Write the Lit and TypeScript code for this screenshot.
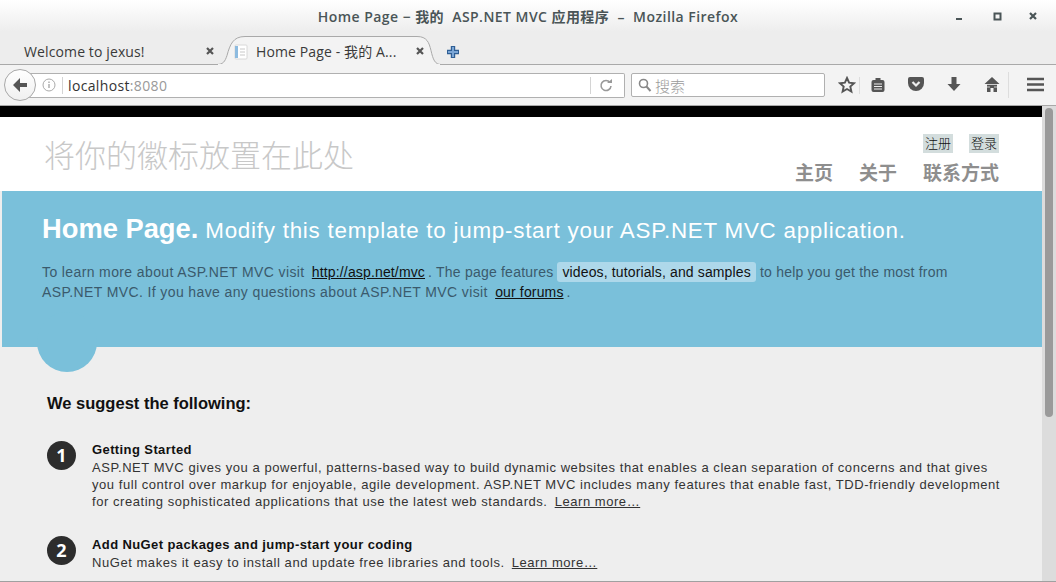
import { LitElement, html, css } from "lit";
import { customElement } from "lit/decorators.js";

@customElement("app-root")
export class AppRoot extends LitElement {
  static styles = css`
    :host { display: block; width: 1056px; height: 582px; overflow: hidden; background: #eee; font-family: "Liberation Sans", "Noto Sans CJK SC", sans-serif; }
    * { box-sizing: border-box; }
    .chrome { height: 106px; background: linear-gradient(#fff 0, #ededed 32px, #ededed 100%); display: flex; flex-direction: column; border-bottom: 1px solid #a8a8a8; font-family: "Open Sans", "Noto Sans CJK SC", sans-serif; }
    .title { height: 32px; display: flex; align-items: center; justify-content: center; font-size: 14px; font-weight: 600; color: #4a5557; position: relative; letter-spacing: 0.45px; }
    .title span { white-space: pre; }
    .winbtns { position: absolute; right: 0; top: 0; }
    .tabs { height: 33px; position: relative; border-bottom: 1px solid #a9a9a9; font-size: 14px; color: #3a3a3a; letter-spacing: 0.12px; }
    .tab1label { position: absolute; left: 24px; top: 10px; line-height: 19px; white-space: nowrap; }
    .tab2 { position: absolute; left: 217px; top: 4px; }
    .tab2label { position: absolute; left: 256px; top: 10px; line-height: 19px; white-space: nowrap; }
    .x { position: absolute; }
    .plus { position: absolute; left: 445px; top: 12px; }
    .nav { flex: 1; position: relative; background: #f3f3f3; }
    .url { position: absolute; left: 20px; top: 8px; width: 605px; height: 25px; background: #fff; border: 1px solid #b0b0b0; border-left: none; border-radius: 0 2px 2px 0; font-size: 14px; line-height: 23px; padding-left: 48px; color: #333; letter-spacing: 0.35px; }
    .url span { color: #999; }
    .back { position: absolute; left: 4px; top: 4px; width: 32px; height: 32px; border-radius: 50%; background: linear-gradient(#fff, #f0f0f0); border: 1px solid #a8a8a8; display: flex; align-items: center; justify-content: center; }
    .sep { position: absolute; top: 12px; height: 17px; width: 1px; background: #d4d4d4; }
    .sep.tall { left: 1008px; height: 26px; top: 7px; background: #ddd; }
    .sep.light { left: 859px; background: #ddd; }
    .search { position: absolute; left: 631px; top: 8px; width: 194px; height: 24px; background: #fff; border: 1px solid #b0b0b0; border-radius: 2px; display: flex; align-items: center; padding-left: 6px; gap: 3px; font-size: 15px; color: #9a9a9a; }
    .search span { font-family: "Noto Sans CJK SC", sans-serif; font-weight: 300; }
    .ic { position: absolute; }
    .view { position: relative; height: 476px; overflow: hidden; background: #eee; }
    .blackbar { height: 11px; background: #000; }
    .head { height: 74px; background: #fff; display: flex; justify-content: space-between; padding: 0 57px 0 44px; }
    .logo { font-size: 31px; color: #c8c8c8; line-height: 36px; padding-top: 19px; font-family: "Noto Sans CJK SC", sans-serif; font-weight: 300; }
    .rightcol { display: flex; flex-direction: column; align-items: flex-end; padding-top: 17px; }
    .login { display: flex; gap: 16px; }
    .login a { background: #d3dddd; color: #111; font-size: 13px; line-height: 18px; height: 19px; padding: 0 2px; font-family: "Noto Sans CJK SC", sans-serif; font-weight: 300; }
    .menu { display: flex; gap: 26px; margin-top: 7px; font-size: 19px; font-weight: 700; color: #8e8e8e; line-height: 24px; font-family: "Noto Sans CJK SC", sans-serif; }
    .hero { position: relative; margin: 0 14px 0 2px; height: 156px; background: #7ac0da; padding: 20px 40px 0; }
    .hero h1 { margin: 0; font-size: 22.4px; line-height: 36px; color: #fff; font-weight: 400; white-space: nowrap; letter-spacing: 0.75px; }
    .hero h1 b { font-size: 27.3px; font-weight: 700; letter-spacing: 0; }
    .hero p { margin: 13px 0 0; font-size: 14px; line-height: 20px; color: #3a5a6c; width: 920px; letter-spacing: 0.22px; }
    .wide { letter-spacing: 0.38px; }
    .hero a { color: #111; text-decoration: underline; margin: 0 3px; letter-spacing: 0.15px; }
    .hl { background: #aed8ea; color: #111; border-radius: 3px; padding: 2px 5px; letter-spacing: 0.13px; }
    .bump { position: absolute; left: 35px; top: 121px; width: 60px; height: 60px; background: #7ac0da; border-radius: 50%; }
    .main { padding: 0 0 0 47px; font-size: 13px; width: 1014px; }
    .main h3 { margin: 0; padding-top: 46px; font-size: 16.5px; line-height: 20px; font-weight: 700; color: #111; }
    .row { position: relative; padding-left: 45px; letter-spacing: 0.55px; line-height: 17px; color: #333; }
    .row.a { margin-top: 28px; }
    .row.b { margin-top: 26px; }
    .row h5 { margin: 0 0 1px; font-size: 13px; line-height: 17px; font-weight: 700; color: #111; letter-spacing: 0.4px; }
    .row p { margin: 0; }
    .row a { color: #333; text-decoration: underline; margin-left: 3px; }
    .num { position: absolute; left: 0; top: 0; width: 29px; height: 29px; border-radius: 50%; background: #2d2d2d; color: #fff; font: 700 18px/29px "Open Sans", sans-serif; text-align: center; letter-spacing: 0; }
    .track { position: absolute; right: 0; top: 0; bottom: 0; width: 14px; background: #dcdcdc; }
    .thumb { position: absolute; left: 3px; top: 2px; width: 8px; height: 309px; border-radius: 4px; background: #9a9a9a; }
    .bottomline { position: absolute; left: 0; right: 0; bottom: 0; height: 1px; background: #a0a0a0; }
  `;

  render() {
    const g = "#555";
    return html`
      <div class="chrome">
        <div class="title">
          <span>Home Page − 我的  ASP.NET MVC 应用程序  –  Mozilla Firefox</span>
          <svg class="winbtns" width="110" height="32">
            <rect x="10" y="18" width="6" height="2" fill="#4a5557"/>
            <rect x="48.500" y="13.500" width="6" height="6" fill="none" stroke="#4a5557" stroke-width="2"/>
            <path d="M84 13l6 6M90 13l-6 6" stroke="#4a5557" stroke-width="2.200" fill="none"/>
          </svg>
        </div>
        <div class="tabs">
          <span class="tab1label">Welcome to jexus!</span>
          <svg class="x" style="left:205px;top:14px" width="11" height="11"><path d="M2 2l6 6M8 2l-6 6" stroke="#555" stroke-width="2.200"/></svg>
          <svg class="tab2" width="224" height="29" viewBox="0 0 224 29">
            <path d="M0 28.500c6 0 8-3 10-9 3-11 6-19 18-19h172c10 0 12 6 14 14 2 9 4 14 10 14" fill="#f3f3f3" stroke="#a9a9a9"/>
            <path d="M1 29h222" stroke="#f3f3f3" stroke-width="2"/>
          </svg>
          <svg class="ic" style="left:233px;top:12px" width="15" height="16">
            <rect x="2" y="1" width="12" height="14" rx="1" fill="#fff" stroke="#d8d8d8"/>
            <rect x="2" y="2" width="3" height="12" fill="#8dbbdf"/>
            <path d="M7 5h5M7 8h5M7 11h5" stroke="#c8c8c8"/>
          </svg>
          <span class="tab2label">Home Page - 我的 A...</span>
          <svg class="x" style="left:415px;top:14px" width="11" height="11"><path d="M2 2l6 6M8 2l-6 6" stroke="#555" stroke-width="2.200"/></svg>
          <svg class="plus" width="16" height="16"><path d="M8 2v12M2 8h12" stroke="#2f5f95" stroke-width="4.400"/><path d="M8 3v10M3 8h10" stroke="#7ba6d6" stroke-width="2"/></svg>
        </div>
        <div class="nav">
          <div class="url">localhost<span>:8080</span></div>
          <div class="back"><svg width="18" height="18" viewBox="0 0 18 18"><path d="M9 2L2 9l7 7v-5h7V7H9z" fill="#555"/></svg></div>
          <svg class="ic" style="left:41px;top:12px" width="16" height="16"><circle cx="8" cy="8" r="6" fill="none" stroke="#aaa"/><path d="M8 7v4M8 4.500v1.500" stroke="#999" stroke-width="1.200"/></svg>
          <div class="sep" style="left:62px"></div>
          <div class="sep" style="left:590px"></div>
          <svg class="ic" style="left:599px;top:13px" width="14" height="14"><path d="M11 4.500A5 5 0 1 0 12 8" fill="none" stroke="#999" stroke-width="1.600"/><path d="M8 5h5V1z" fill="#999"/></svg>
          <div class="search">
            <svg width="14" height="15"><circle cx="5.500" cy="5.500" r="4" fill="none" stroke="#888" stroke-width="1.600"/><path d="M8.500 8.500l4 4.500" stroke="#888" stroke-width="2"/></svg>
            <span>搜索</span>
          </div>
          <svg class="ic" style="left:838px;top:11px" width="18" height="18" viewBox="0 0 18 18"><path d="M9 2l2.100 4.700 5 .5-3.800 3.300 1.100 5L9 13l-4.400 2.500 1.100-5L1.900 7.200l5-.5z" fill="none" stroke="${g}" stroke-width="1.900"/></svg>
          <div class="sep light"></div>
          <svg class="ic" style="left:870px;top:12px" width="16" height="16"><rect x="1.500" y="3" width="13" height="12" rx="2" fill="${g}"/><rect x="5.500" y="1" width="5" height="3" fill="${g}"/><path d="M4 7h8M4 9.500h8M4 12h8" stroke="#eee"/></svg>
          <svg class="ic" style="left:907px;top:11px" width="18" height="17"><path d="M1 3a2 2 0 0 1 2-2h12a2 2 0 0 1 2 2v4a8 8 0 0 1-16 0z" fill="${g}"/><path d="M5.500 6L9 9.500 12.500 6" fill="none" stroke="#eee" stroke-width="2.200"/></svg>
          <svg class="ic" style="left:946px;top:11px" width="16" height="18"><path d="M5.500 1h5v7h4L8 15 1.500 8h4z" fill="${g}"/></svg>
          <svg class="ic" style="left:984px;top:11px" width="16" height="17"><path d="M8 1L0.500 8H3v8h3.500v-4h3v4H13V8h2.500z" fill="${g}"/><path d="M3 8.500h10M3 11h3M10 11h3" stroke="#eee" stroke-width=".8"/></svg>
          <div class="sep tall"></div>
          <svg class="ic" style="left:1027px;top:12px" width="17" height="15"><path d="M0 2h17M0 7.500h17M0 13h17" stroke="${g}" stroke-width="2.600"/></svg>
        </div>
      </div>
      <div class="view">
        <div class="blackbar"></div>
        <div class="head">
          <div class="logo">将你的徽标放置在此处</div>
          <div class="rightcol">
            <div class="login"><a>注册</a><a>登录</a></div>
            <div class="menu"><span>主页</span><span>关于</span><span>联系方式</span></div>
          </div>
        </div>
        <div class="hero">
          <h1><b>Home Page.</b> Modify this template to jump-start your ASP.NET MVC application.</h1>
          <p><span class="wide">To learn more about ASP.NET MVC visit </span><a>http://asp.net/mvc</a>. The page features <span class="hl">videos, tutorials, and samples</span> to help you get the most from <span class="wide">ASP.NET MVC. If you have any questions about ASP.NET MVC visit </span><a>our forums</a>.</p>
          <div class="bump"></div>
        </div>
        <div class="main">
          <h3>We suggest the following:</h3>
          <div class="row a">
            <div class="num">1</div>
            <h5>Getting Started</h5>
            <p>ASP.NET MVC gives you a powerful, patterns-based way to build dynamic websites that enables a clean separation of concerns and that gives you full control over markup for enjoyable, agile development. ASP.NET MVC includes many features that enable fast, TDD-friendly development for creating sophisticated applications that use the latest web standards. <a>Learn more…</a></p>
          </div>
          <div class="row b">
            <div class="num">2</div>
            <h5>Add NuGet packages and jump-start your coding</h5>
            <p>NuGet makes it easy to install and update free libraries and tools. <a>Learn more…</a></p>
          </div>
        </div>
        <div class="track"><div class="thumb"></div></div>
        <div class="bottomline"></div>
      </div>
    `;
  }
}
